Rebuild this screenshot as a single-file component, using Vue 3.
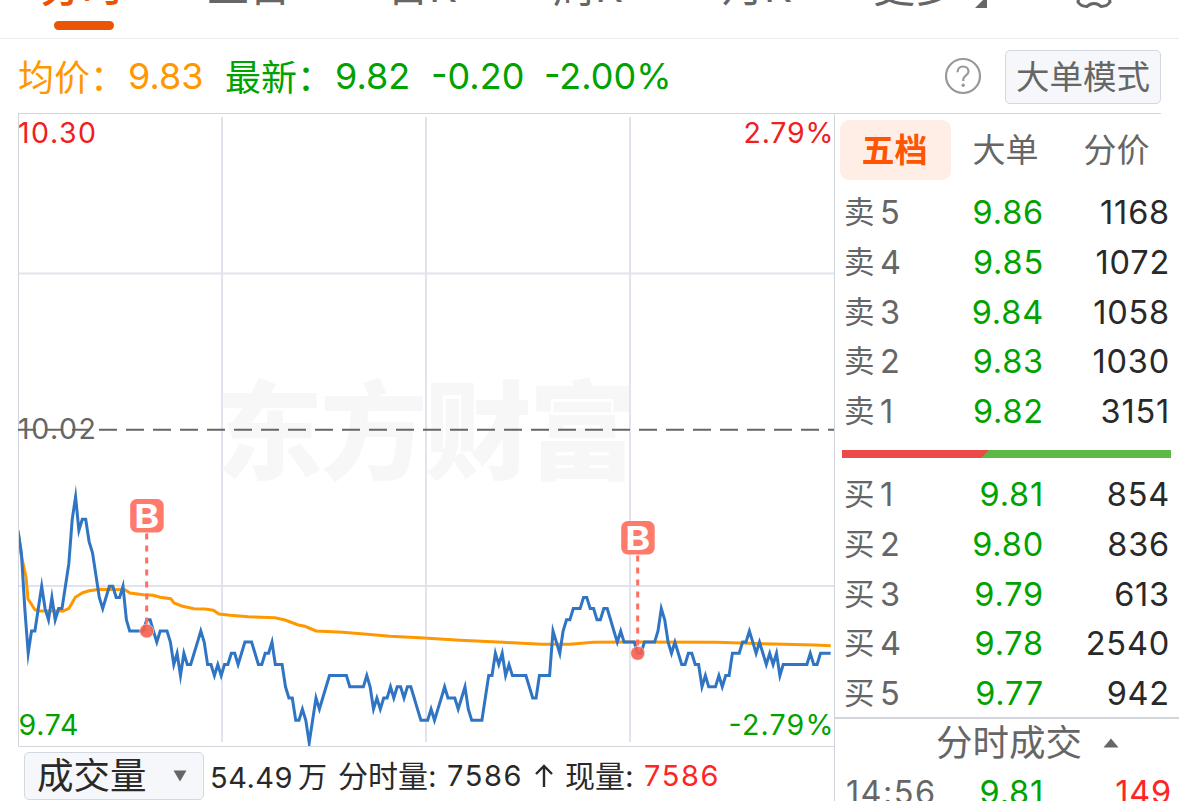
<template>
  <div class="quote-page">
    <nav class="period-tabs">
      <span v-for="tab in tabs" :key="tab" class="period-tab" :class="{ 'period-tab--active': tab === '分时' }">{{ tab }}</span>
      <svg class="more-corner" viewBox="0 0 12 12"><path d="M12 0V12H0Z" /></svg>
      <svg class="settings-icon" viewBox="0 0 40 40">
        <path d="M13 4.5Q16 7 20 7Q24 7 27 4.5L35 9.500Q34 20 36 30Q33 34.500 27 34.500Q24 31.500 20 31.500Q16 31.500 13 34.500Q7 34.500 4 30Q6 20 5 9.500Z" />
      </svg>
    </nav>

    <header class="summary">
      <span class="summary-label avg">均价：</span>
      <span class="summary-num avg avg-num">9.83</span>
      <span class="summary-label down">最新：</span>
      <span class="summary-num down last-num">9.82</span>
      <span class="summary-num down diff-num">-0.20</span>
      <span class="summary-num down">-2.00%</span>
      <svg class="help-icon" viewBox="0 0 38 38">
        <circle cx="19" cy="19" r="17" />
        <path d="M13.500 15.200C13.500 11.500 16 9.500 19 9.500C22 9.500 24.500 11.500 24.500 14.500C24.500 18.500 19.200 18.300 19.200 22.800V24" />
        <circle class="help-dot" cx="19.200" cy="28.200" r="1.700" />
      </svg>
      <button class="mode-btn">大单模式</button>
    </header>

    <main class="board">
      <section class="chart-col">
        <svg class="chart" viewBox="18 114 816 633">
          <text class="watermark" x="216" y="471" textLength="420">东方财富</text>
          <g class="grid">
            <path d="M18 273.500H834M18 586H834" />
            <path d="M222 117V742M426 117V742M630 117V742" />
          </g>
          <path class="frame" d="M18.500 114V746.500H834" />
          <text class="axis up" x="18" y="143" textLength="78">10.30</text>
          <text class="axis up" x="743.500" y="143" textLength="90">2.79%</text>
          <text class="axis flat" x="18" y="439" textLength="78">10.02</text>
          <path class="base-line" d="M18 429.700H834" />
          <text class="axis down" x="18.500" y="735" textLength="60">9.74</text>
          <text class="axis down" x="728.500" y="735" textLength="105">-2.79%</text>
          <clipPath id="plot-area"><rect x="19" y="114" width="815" height="632" /></clipPath>
          <g clip-path="url(#plot-area)">
            <polyline class="avg-line" :points="avgPoints" />
            <polyline class="price-line" :points="pricePoints" />
          </g>
          <g v-for="m in buys" :key="m.x" class="buy">
            <path class="buy-stem" :d="`M${m.x} ${m.top + 34.500}V${m.y}`" />
            <circle :cx="m.x" :cy="m.y" r="7" />
            <rect :x="m.x - 16.500" :y="m.top" width="33.500" height="33.500" rx="6.500" />
            <text :x="m.x - 12.500" :y="m.top + 29" textLength="25" lengthAdjust="spacingAndGlyphs">B</text>
          </g>
        </svg>

        <footer class="volume-bar">
          <button class="indicator-btn">
            <span>成交量</span>
            <svg class="caret" viewBox="0 0 14 12"><path d="M0.500 0.500H13.500L7 11.500Z" /></svg>
          </button>
          <span class="vol-total">54.49<i>万</i></span>
          <span class="vol-label">分时量:</span>
          <span class="vol-minute">7586</span>
          <svg class="vol-arrow" viewBox="0 0 20 24"><path d="M10 23V2M2 10L10 2L18 10" /></svg>
          <span class="vol-label vol-now">现量:</span>
          <span class="vol-now-num">7586</span>
        </footer>
      </section>

      <aside class="depth">
        <div class="depth-tabs">
          <span class="depth-tab depth-tab--active">五档</span>
          <span class="depth-tab">大单</span>
          <span class="depth-tab">分价</span>
        </div>

        <div v-for="row in asks" :key="'s' + row.level" class="depth-row">
          <span class="side"><i>卖</i>{{ row.level }}</span>
          <span class="price">{{ row.price }}</span>
          <span class="qty">{{ row.qty }}</span>
        </div>

        <svg class="ratio" viewBox="0 0 329 8" preserveAspectRatio="none">
          <rect class="ratio-sell" width="329" height="8" />
          <path class="ratio-buy" d="M0 0H147L139 8H0Z" />
        </svg>

        <div v-for="row in bids" :key="'b' + row.level" class="depth-row">
          <span class="side"><i>买</i>{{ row.level }}</span>
          <span class="price">{{ row.price }}</span>
          <span class="qty">{{ row.qty }}</span>
        </div>

        <div class="deals">
          <div class="deals-title">
            <span>分时成交</span>
            <svg viewBox="0 0 16 10"><path d="M8 0.500L15.500 9.500H0.500Z" /></svg>
          </div>
          <div class="deal-row">
            <span class="time">14:56</span>
            <span class="price">9.81</span>
            <span class="qty up-text">149</span>
          </div>
        </div>
      </aside>
    </main>
  </div>
</template>

<script setup>
import { computed } from 'vue';

const tabs = ['分时', '五日', '日K', '周K', '月K', '更多'];

const asks = [
  { level: 5, price: '9.86', qty: 1168 },
  { level: 4, price: '9.85', qty: 1072 },
  { level: 3, price: '9.84', qty: 1058 },
  { level: 2, price: '9.83', qty: 1030 },
  { level: 1, price: '9.82', qty: 3151 },
];

const bids = [
  { level: 1, price: '9.81', qty: 854 },
  { level: 2, price: '9.80', qty: 836 },
  { level: 3, price: '9.79', qty: 613 },
  { level: 4, price: '9.78', qty: 2540 },
  { level: 5, price: '9.77', qty: 942 },
];

// Ticks (0.01) below the previous close, one value per minute
const ticks = [
  9, 11, 16, 20, 18, 18, 16, 14, 16, 17, 15, 17, 16, 16, 14, 12, 8, 6, 9, 8,
  8, 10, 11, 13, 15, 16, 15, 14, 14, 15, 15, 14, 17, 18, 18, 18, 18, 18, 17, 17,
  18, 19, 18, 18, 18, 19, 21, 20, 22, 20, 21, 21, 20, 19, 18, 19, 21, 21, 22, 21,
  22, 21, 21, 20, 20, 21, 20, 19, 19, 19, 20, 21, 21, 20, 20, 19, 21, 21, 21, 23,
  24, 24, 26, 26, 25, 26, 28, 26, 24, 25, 24, 23, 22, 22, 22, 22, 22, 22, 23, 23,
  23, 23, 23, 22, 23, 25, 24, 25, 24, 24, 23, 24, 23, 23, 24, 23, 23, 24, 25, 26,
  26, 26, 25, 26, 25, 24, 23, 24, 24, 24, 25, 24, 23, 25, 26, 26, 26, 26, 24, 22,
  22, 20, 21, 20, 22, 21, 22, 22, 22, 22, 22, 23, 24, 24, 22, 22, 22, 22, 18, 19,
  20, 18, 17, 17, 16, 16, 16, 15, 15, 16, 16, 17, 17, 16, 16, 17, 18, 19, 18, 19,
  19, 19, 19, 20, 20, 19, 19, 19, 19, 18, 16, 17, 19, 20, 19, 20, 21, 21, 20, 20,
  21, 21, 23, 22, 23, 23, 23, 22, 23, 22, 22, 20, 20, 20, 19, 19, 18, 19, 20, 19,
  20, 21, 20, 21, 20, 22, 21, 21, 21, 21, 21, 21, 21, 21, 20, 21, 21, 20, 20, 20,
  20,
];

const pricePoints = computed(() =>
  ticks.map((t, i) => `${(18 + i * 3.386).toFixed(1)},${(429.9 + t * 11.17).toFixed(1)}`).join(' ')
);

const avgPoints = [
  '19,537 20.7,553 26,577 28,599 31.3,604 34.7,609.5 38.3,611 63.3,611 69,608.3 75.3,597.3',
  '82.7,592.7 89.3,590.7 100,589.3 125,589.7 130,593 143.3,594.7 153.3,595.3 160,597.3',
  '170.7,598.7 174,603 181.7,606 194,608.7 205,609 213.3,610.3 219,614 230,615.3 248.3,616.7',
  '275,617.7 285,620 298.3,625 305,626.3 316,631 343,632.3 373,634.7 390,636.3 420,637.7',
  '460,640.3 503,642.3 541.7,644.3 570,644.3 593,642.3 630,642 716.7,642.3 773.3,644 815,645 830.7,645.7',
].join(' ');

const buys = [
  { x: 146.7, y: 631, top: 499 },
  { x: 637.7, y: 653.3, top: 521 },
];
</script>

<style>
body {
  background: #fff;
}
</style>

<style scoped>
.quote-page {
  width: 1179px;
  height: 801px;
  overflow: hidden;
  background: #fff;
  color: #666;
  font-family: Inter, 'Noto Sans CJK SC', sans-serif;
  display: flex;
  flex-direction: column;
}

.quote-page svg {
  display: block;
  flex: none;
}

/* Period tabs, scrolled half out of view */
.period-tabs {
  box-sizing: border-box;
  height: 39px;
  flex: none;
  overflow: hidden;
  display: grid;
  grid-template-columns: 167px 180px 166px 169px 151px 102px 99px 40px;
  padding-left: 40px;
  border-bottom: 1px solid #ececec;
}

.period-tab {
  font-size: 42px;
  line-height: 50px;
  height: 50px;
  margin-top: -38px;
  white-space: nowrap;
}

.period-tab--active {
  color: #ea5504;
  font-weight: 500;
}

.period-tab--active::after {
  content: '';
  display: block;
  width: 60px;
  height: 9px;
  margin: 9px 0 0 14px;
  border-radius: 5px;
  background: #ea5504;
}

.more-corner {
  width: 12px;
  height: 12px;
  margin-top: -4px;
  fill: #666;
}

.settings-icon {
  width: 40px;
  height: 40px;
  margin-top: -28px;
  fill: none;
  stroke: #666;
  stroke-width: 3;
}

/* Summary line */
.summary {
  height: 75px;
  margin-bottom: -1px;
  flex: none;
  display: flex;
  align-items: center;
  padding: 0 18px;
  white-space: nowrap;
}

.summary-label {
  font-size: 36px;
  width: 110px;
  padding-bottom: 3px;
}

.summary-num {
  font-size: 36px;
  padding-bottom: 1px;
}

.avg {
  color: #ff9800;
}

.avg-num {
  width: 97px;
}

.last-num {
  width: 96px;
}

.diff-num {
  width: 113px;
}

.down {
  color: #00a200;
}

.help-icon {
  width: 38px;
  height: 38px;
  margin-left: auto;
  margin-bottom: 2px;
  fill: none;
  stroke: #999;
  stroke-width: 2.2;
}

.help-icon .help-dot {
  fill: #999;
  stroke: none;
}

.mode-btn {
  box-sizing: border-box;
  width: 156px;
  height: 54px;
  margin-left: 23px;
  padding: 0;
  border: 1.5px solid #d3d7df;
  border-radius: 5px;
  background: #f6f7fa;
  color: #666;
  font: 33.5px/50px Inter, 'Noto Sans CJK SC', sans-serif;
}

/* Chart */
.board {
  flex: 1;
  min-height: 0;
  display: flex;
  align-items: flex-start;
}

.chart-col {
  width: 816px;
  margin-left: 18px;
  flex: none;
  border-top: 1px solid #d3d5dd;
}

.chart {
  width: 816px;
  height: 633px;
}

.watermark {
  font-size: 107px;
  font-weight: 900;
  fill: #f7f7f7;
}

.grid path {
  fill: none;
  stroke: #e1e4ec;
  stroke-width: 2;
}

.frame {
  fill: none;
  stroke: #d3d5dd;
  stroke-width: 1;
}

.axis {
  font-size: 28.5px;
}

.axis.up {
  fill: #f02020;
}

.axis.down {
  fill: #00a200;
}

.axis.flat {
  fill: #666;
}

.base-line {
  stroke: #666;
  stroke-width: 2;
  stroke-dasharray: 18 9;
}

.avg-line,
.price-line {
  fill: none;
  stroke-width: 3;
  stroke-miterlimit: 10;
}

.avg-line {
  stroke: #ff9800;
}

.price-line {
  stroke: #3075c4;
}

.buy circle {
  fill: #f55f50;
  fill-opacity: 0.9;
  stroke: #fff;
  stroke-opacity: 0.5;
  stroke-width: 1;
}

.buy rect {
  fill: #ff7a6b;
}

.buy text {
  fill: #fff;
  font-size: 33px;
  font-weight: 700;
}

.buy-stem {
  stroke: #ff6f60;
  stroke-width: 3;
  stroke-dasharray: 6 6;
}

/* Volume strip */
.volume-bar {
  display: flex;
  align-items: center;
  height: 54px;
  padding: 3px 0 0 6px;
  box-sizing: border-box;
  color: #292929;
  font-size: 29px;
  white-space: nowrap;
}

.indicator-btn {
  box-sizing: border-box;
  width: 180px;
  height: 48px;
  padding: 0 16px 0 12px;
  display: flex;
  align-items: center;
  justify-content: space-between;
  border: 1.5px solid #d3d7df;
  border-radius: 5px;
  background: #f6f7fa;
  color: #292929;
  font: 36.5px/44px Inter, 'Noto Sans CJK SC', sans-serif;
}

.caret {
  width: 14px;
  height: 12px;
  fill: #666;
}

.vol-total {
  width: 128px;
  margin-left: 6px;
  padding-bottom: 2px;
  letter-spacing: 0.5px;
}

.vol-total i {
  margin-left: 5px;
  font-style: normal;
}

.vol-label {
  width: 109px;
  padding-bottom: 3px;
  font-size: 30px;
}

.vol-minute {
  width: 87px;
  letter-spacing: 1.6px;
}

.vol-arrow {
  width: 20px;
  height: 24px;
  fill: none;
  stroke: #292929;
  stroke-width: 2.4;
}

.vol-now {
  width: 79px;
  margin-left: 11px;
}

.vol-now-num {
  color: #ff2525;
  letter-spacing: 1.6px;
}

/* Order book */
.depth {
  box-sizing: border-box;
  flex: 1;
  height: 688px;
  overflow: hidden;
  border-left: 1.5px solid #d3d5dd;
  background: linear-gradient(#d3d5dd, #d3d5dd) 0 0 / 326px 1px no-repeat;
}

.depth-tabs {
  display: flex;
  margin: 7px 0 8px 5px;
}

.depth-tab {
  width: 111px;
  height: 60px;
  line-height: 60px;
  text-align: center;
  text-indent: -2px;
  border-radius: 9px;
  font-size: 33px;
}

.depth-tab--active {
  background: #ffeee6;
  color: #ff5500;
  font-weight: 700;
}

.depth-row,
.deal-row {
  display: grid;
  grid-template-columns: 101px 99px 126px;
  align-items: center;
  height: 49.8px;
  padding-left: 9px;
  font-size: 32.5px;
  line-height: 50px;
  letter-spacing: 0.8px;
}

.side {
  display: flex;
  align-items: center;
}

.side i {
  width: 36px;
  padding-bottom: 2px;
  box-sizing: border-box;
  font-size: 30.5px;
  font-style: normal;
  line-height: 46px;
}

.price {
  color: #00a200;
  text-align: right;
}

.qty {
  color: #292929;
  text-align: right;
}

.qty.up-text {
  color: #ff2525;
  padding-right: 1px;
  margin-right: -3px;
}

.time {
  padding-left: 2px;
  letter-spacing: 1.4px;
}

.ratio {
  width: 329px;
  height: 8px;
  margin: 13px 0 12px 7px;
}

.ratio-sell {
  fill: #5cb946;
}

.ratio-buy {
  fill: #ec4a48;
}

.deals {
  margin-top: -2px;
  border-top: 2px solid #d3d5dd;
}

.deals-title {
  display: flex;
  align-items: center;
  height: 49px;
  padding-left: 101px;
  font-size: 36.5px;
}

.deals-title span {
  padding-bottom: 5px;
}

.deals-title svg {
  width: 16px;
  height: 10px;
  margin-left: 21px;
}

.deals-title path {
  fill: #666;
}
</style>
